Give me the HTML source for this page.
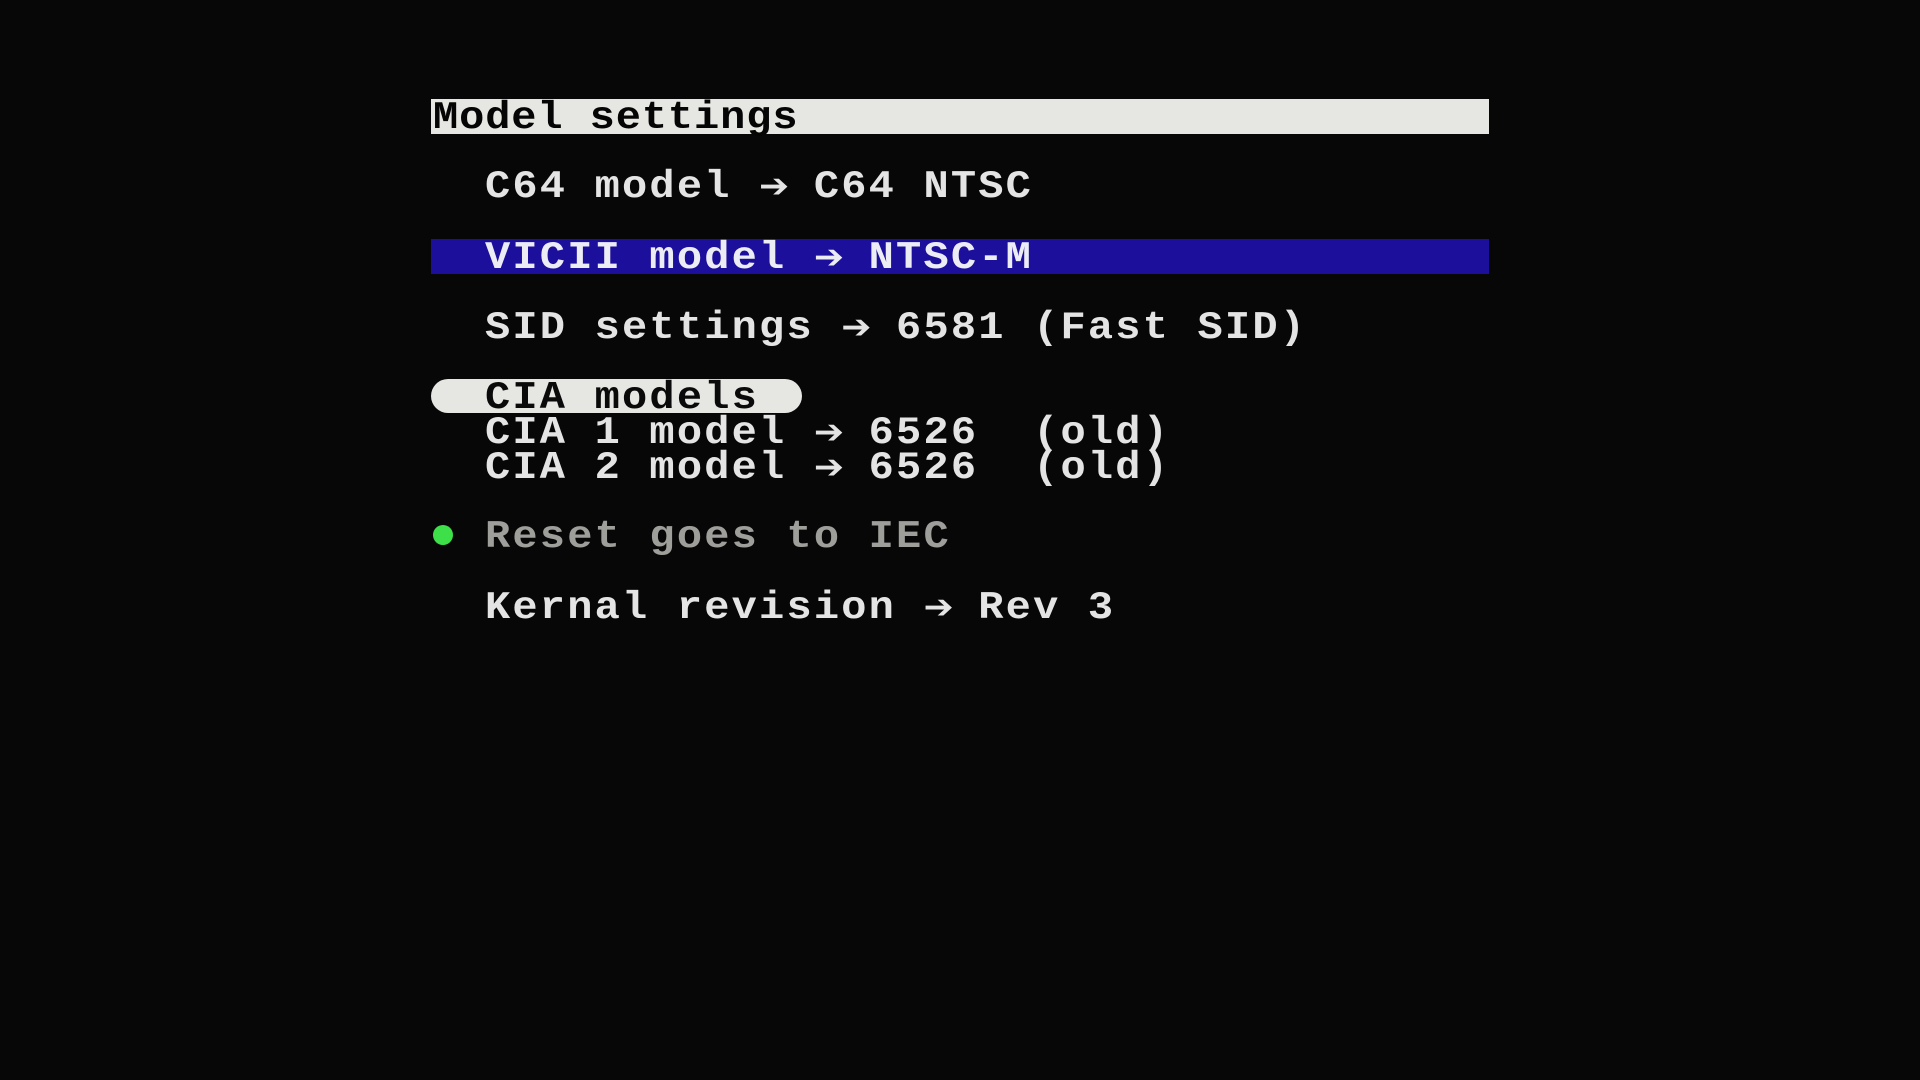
<!DOCTYPE html>
<html><head><style>
body{margin:0;width:1920px;height:1080px;background:#070707;overflow:hidden;position:relative;font-family:"Liberation Mono",monospace;font-weight:bold;}
.t{position:absolute;font-size:42px;letter-spacing:2.2px;line-height:36px;height:36px;color:#e4e4e4;white-space:pre;transform:scaleY(0.92);transform-origin:50% 50%;}
.a{display:inline-block;width:27.4px;text-align:center;font-family:"DejaVu Sans",sans-serif;font-size:36px;letter-spacing:0;}
.bar{position:absolute;left:431px;width:1058px;}
</style></head><body>
<div class="bar" style="top:99px;height:35px;background:#e6e6e2;"></div>
<div class="t" style="left:433px;top:100px;color:#050505;letter-spacing:0.9px;">Model settings</div>
<div class="t" style="left:485px;top:169px;">C64 model <span class="a">➔</span> C64 NTSC</div>
<div class="bar" style="top:239px;height:35px;background:#1c0f9c;"></div>
<div class="t" style="left:485px;top:240px;color:#ececf4;">VICII model <span class="a">➔</span> NTSC-M</div>
<div class="t" style="left:485px;top:310px;">SID settings <span class="a">➔</span> 6581 (Fast SID)</div>
<div style="position:absolute;left:431px;top:379px;width:371px;height:34px;background:#e6e6e2;border-radius:17px;"></div>
<div class="t" style="left:485px;top:380px;color:#0a0a0a;">CIA models</div>
<div class="t" style="left:485px;top:415px;">CIA 1 model <span class="a">➔</span> 6526  (old)</div>
<div class="t" style="left:485px;top:450px;">CIA 2 model <span class="a">➔</span> 6526  (old)</div>
<div style="position:absolute;left:433px;top:525px;width:20px;height:20px;background:#3ee04a;border-radius:50%;"></div>
<div class="t" style="left:485px;top:519px;color:#9e9e9a;">Reset goes to IEC</div>
<div class="t" style="left:485px;top:590px;">Kernal revision <span class="a">➔</span> Rev 3</div>
</body></html>
